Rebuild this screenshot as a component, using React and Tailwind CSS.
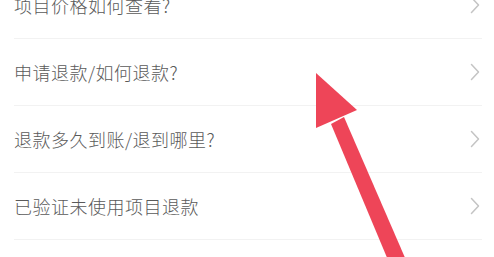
import React from "react";

const items = [
  "项目价格如何查看?",
  "申请退款/如何退款?",
  "退款多久到账/退到哪里?",
  "已验证未使用项目退款",
];

const Chevron = () => (
  <svg width="10" height="18" viewBox="0 0 10 18" fill="none" className="shrink-0">
    <path d="M1.5 1.5 L8.5 9 L1.5 16.5" stroke="#c4c4c4" strokeWidth="1.5" strokeLinecap="round" strokeLinejoin="round" />
  </svg>
);

const App = () => {
  return (
    <div className="relative w-[494px] h-[257px] overflow-hidden bg-white font-['Noto_Sans_CJK_SC',sans-serif]">
      <div className="-mt-[28px] flex flex-col">
        {items.map((t) => (
          <div
            key={t}
            className="ml-[14px] mr-[12px] h-[67px] flex items-center justify-between border-b border-[#f2f2f2]"
          >
            <span className="text-[18px] leading-none font-light tracking-[0.5px] text-[#5a5a5a]">{t}</span>
            <span className="pr-[2px]">
              <Chevron />
            </span>
          </div>
        ))}
      </div>

      {/* red arrow pointing at the refund row */}
      <svg className="absolute inset-0 pointer-events-none" width="494" height="257" viewBox="0 0 494 257">
        <polygon points="316,73 316,128 357,110" fill="#ee4558" />
        <polygon points="331,124 344,117 406,260 388,260" fill="#ee4558" />
      </svg>
    </div>
  );
};

export default App;
